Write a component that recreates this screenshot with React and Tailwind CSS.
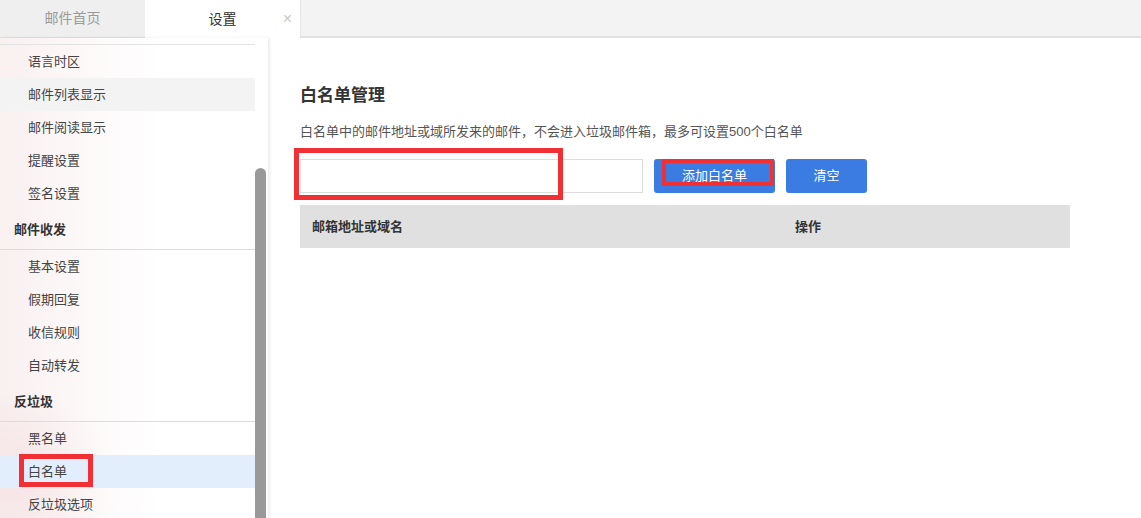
import React from 'react';

const font = { fontFamily: '"Liberation Sans", "Noto Sans CJK SC", sans-serif' };

const groups = [
  { title: null, items: ['语言时区', '邮件列表显示', '邮件阅读显示', '提醒设置', '签名设置'] },
  { title: '邮件收发', items: ['基本设置', '假期回复', '收信规则', '自动转发'] },
  { title: '反垃圾', items: ['黑名单', '白名单', '反垃圾选项'] },
];

const Sidebar = () => (
  <div className="relative w-[268px] h-full overflow-hidden bg-[linear-gradient(90deg,#f9f0f0_0%,#fcf7f7_25%,#ffffff_60%)] shadow-[2px_0_3px_rgba(0,0,0,0.08)]">
    <div className="absolute inset-0 bg-[radial-gradient(circle_at_20px_440px,rgba(240,205,210,0.4),transparent_90px)]" />
    <div className="relative w-[255px] pt-[6px]">
      {groups.map((g, gi) => (
        <div key={gi}>
          {g.title && (
            <div className="h-[39px] flex items-center pl-[14px] text-[13px] font-bold text-[#333] border-b border-[#dcdcdc] mt-[1px]">
              {g.title}
            </div>
          )}
          {!g.title && <div className="border-t border-[#e3e3e3]" />}
          {g.items.map((it) => {
            const hover = it === '邮件列表显示';
            const active = it === '白名单';
            return (
              <div
                key={it}
                className={`h-[33px] flex items-center pl-[28px] text-[13px] text-[#444] ${
                  hover ? 'bg-[#f3f3f3]' : active ? 'bg-[#e2eefb]' : ''
                }`}
              >
                {active ? (
                  <span className="relative">
                    {it}
                    <span className="absolute left-[-9px] top-[-8px] w-[74px] h-[33px] border-[5px] border-[#f03034]" />
                  </span>
                ) : (
                  it
                )}
              </div>
            );
          })}
        </div>
      ))}
    </div>
    <div className="absolute left-[255px] top-[130px] w-[11px] h-[400px] bg-[#999] rounded-t-[6px]" />
  </div>
);

export default function App() {
  return (
    <div className="w-[1141px] h-[518px] overflow-hidden bg-white flex flex-col" style={font}>
      {/* Tabs */}
      <div className="h-[38px] flex shrink-0 bg-[#f3f3f3]">
        <div className="w-[145px] flex items-center justify-center text-[14px] text-[#9a9a9a] bg-[#efefef] border-b border-[#e0e0e0]">
          邮件首页
        </div>
        <div className="relative w-[155px] flex items-center justify-center text-[14px] text-[#333] bg-white">
          设置
          <span className="absolute right-[8px] top-[7px] text-[16px] text-[#c8c8c8]">×</span>
        </div>
        <div className="flex-1 border-l border-[#e6e6e6] border-b-2 border-b-[#e2e2e2]" />
      </div>

      <div className="flex flex-1 min-h-0">
        <Sidebar />
        <div className="flex-1 pl-[32px] pt-[46px]">
          <h2 className="text-[17px] font-bold text-[#333] leading-[24px]">白名单管理</h2>
          <p className="mt-[14px] text-[13px] text-[#555] leading-[20px]">
            白名单中的邮件地址或域所发来的邮件，不会进入垃圾邮件箱，最多可设置500个白名单
          </p>
          <div className="mt-[17px] flex items-center">
            <div className="relative w-[343px] h-[34px] border border-[#dddddd] bg-white">
              <span className="absolute left-[-7px] top-[-12px] w-[269px] h-[52px] border-[5px] border-[#f03034]" />
            </div>
            <button className="relative ml-[11px] w-[121px] h-[34px] rounded-[3px] bg-[#3a7ce1] text-white text-[13px]">
              添加白名单
              <span className="absolute left-[8px] top-0 w-[112px] h-[27px] border-[4px] border-[#f03034]" />
            </button>
            <button className="ml-[11px] w-[81px] h-[34px] rounded-[3px] bg-[#3a7ce1] text-white text-[13px]">
              清空
            </button>
          </div>
          <div className="mt-[12px] w-[770px] h-[43px] bg-[#e0e0e0] flex items-center text-[13px] font-bold text-[#333]">
            <span className="pl-[12px] w-[495px]">邮箱地址或域名</span>
            <span>操作</span>
          </div>
        </div>
      </div>
    </div>
  );
}
